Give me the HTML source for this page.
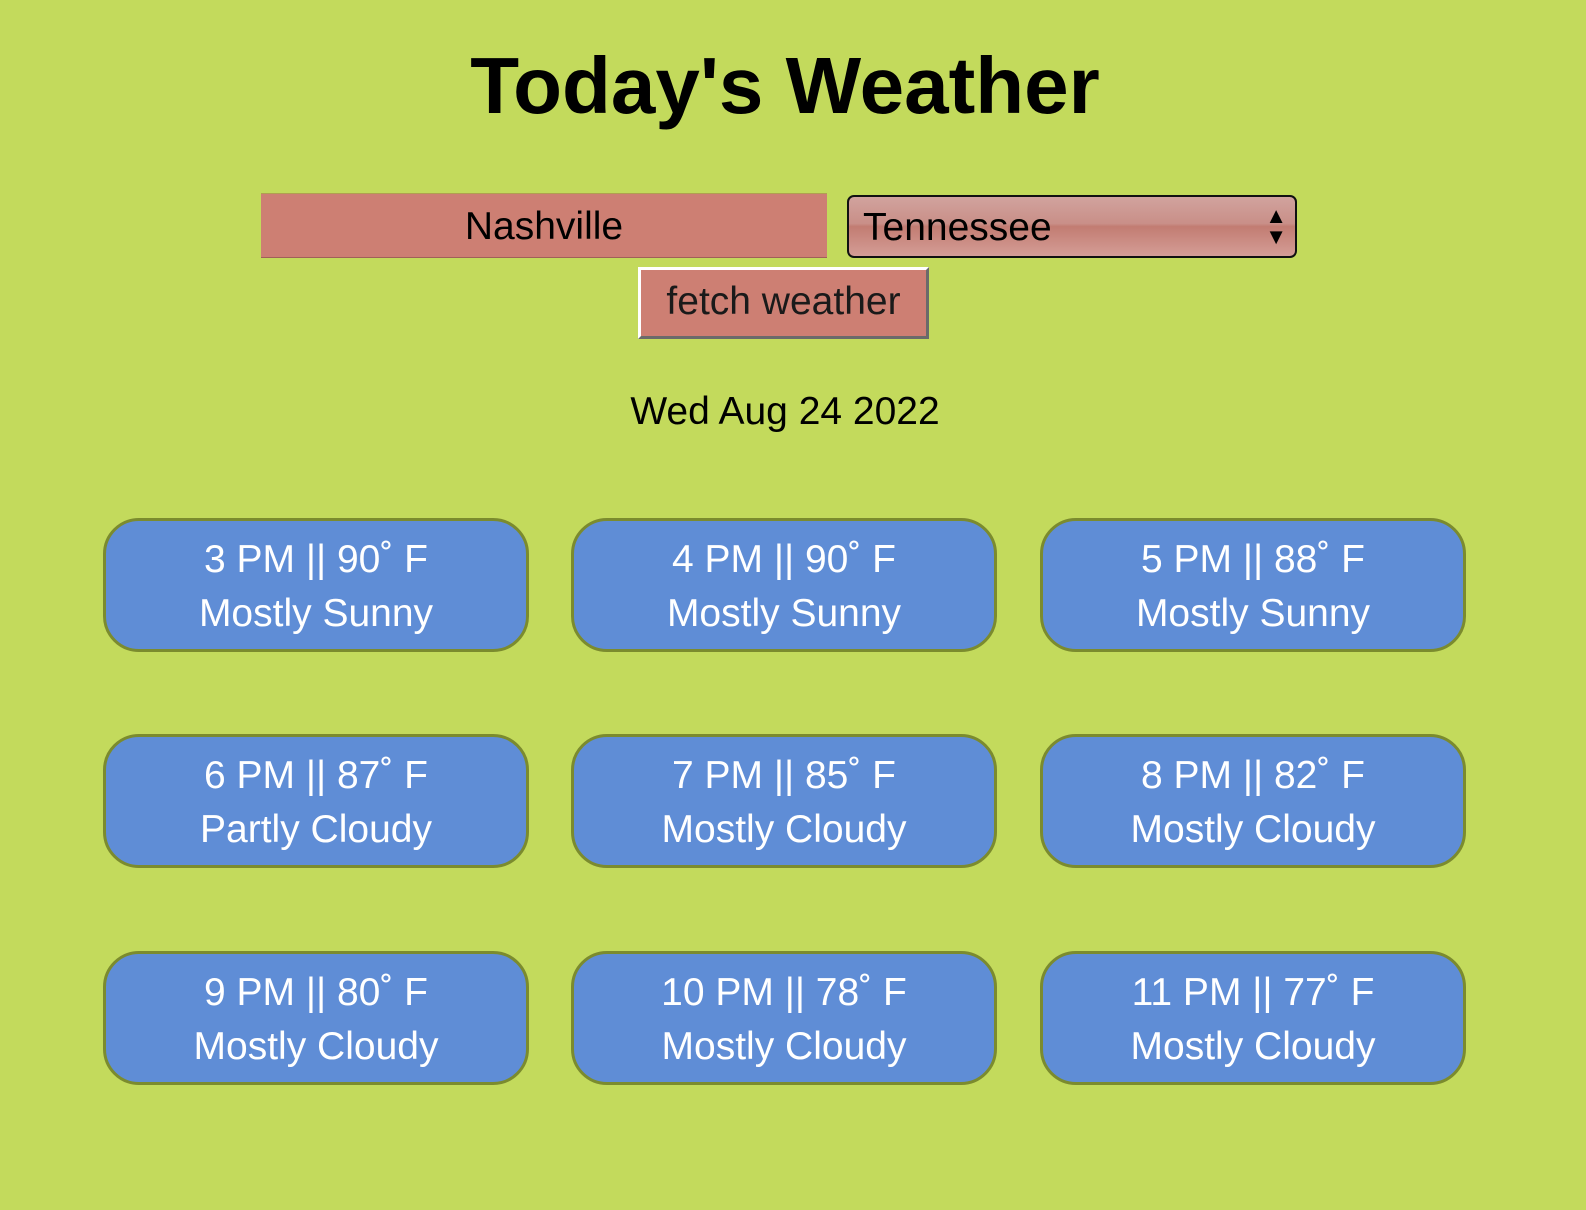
<!DOCTYPE html>
<html><head><meta charset="utf-8"><style>
html,body{margin:0;padding:0;}
body{width:1586px;height:1210px;background:#c3da5c;font-family:"Liberation Sans",sans-serif;position:relative;overflow:hidden;}
.t{position:absolute;left:0;width:1570px;text-align:center;}
h1{position:absolute;left:0;width:1570px;text-align:center;margin:0;top:36px;font-size:80px;font-weight:bold;color:#000;line-height:100px;}
.inp{position:absolute;left:261px;top:193px;width:566px;height:65px;background:#cd7f73;border-top:1px solid #b0a050;border-bottom:1px solid #a06058;box-sizing:border-box;text-align:center;font-size:39px;line-height:65px;color:#000;}
.sel{position:absolute;left:847px;top:195px;width:450px;height:63px;box-sizing:border-box;border:2px solid #111;border-radius:7px;background:linear-gradient(#d1a39e 0%,#c98f88 45%,#c27c72 50%,#d49d96 100%);font-size:39px;line-height:61px;padding-left:14px;color:#000;}
.arr{position:absolute;right:8px;top:8px;font-size:22px;line-height:21px;}
.btn{position:absolute;left:638px;top:267px;width:291px;height:72px;box-sizing:border-box;background:#cd7f73;border-top:3px solid #fff;border-left:3px solid #fff;border-right:3px solid #6a6a6a;border-bottom:3px solid #6a6a6a;text-align:center;font-size:39px;line-height:64px;color:#1a1a1a;}
.date{top:386px;font-size:39px;line-height:52px;color:#000;}
.c{position:absolute;width:426px;height:134px;box-sizing:border-box;background:#5f8dd6;border:3px solid #7b8b2e;border-radius:36px;color:#fff;text-align:center;font-size:39px;line-height:54px;padding-top:12px;}
</style></head><body>
<h1>Today's Weather</h1>
<div class="inp">Nashville</div>
<div class="sel">Tennessee<div class="arr">▲<br>▼</div></div>
<div class="btn">fetch weather</div>
<div class="t date">Wed Aug 24 2022</div>

<div class="c" style="left:103px;top:518px">3 PM || 90˚ F<br>Mostly Sunny</div>
<div class="c" style="left:571px;top:518px">4 PM || 90˚ F<br>Mostly Sunny</div>
<div class="c" style="left:1040px;top:518px">5 PM || 88˚ F<br>Mostly Sunny</div>
<div class="c" style="left:103px;top:734px">6 PM || 87˚ F<br>Partly Cloudy</div>
<div class="c" style="left:571px;top:734px">7 PM || 85˚ F<br>Mostly Cloudy</div>
<div class="c" style="left:1040px;top:734px">8 PM || 82˚ F<br>Mostly Cloudy</div>
<div class="c" style="left:103px;top:951px">9 PM || 80˚ F<br>Mostly Cloudy</div>
<div class="c" style="left:571px;top:951px">10 PM || 78˚ F<br>Mostly Cloudy</div>
<div class="c" style="left:1040px;top:951px">11 PM || 77˚ F<br>Mostly Cloudy</div>
</body></html>
